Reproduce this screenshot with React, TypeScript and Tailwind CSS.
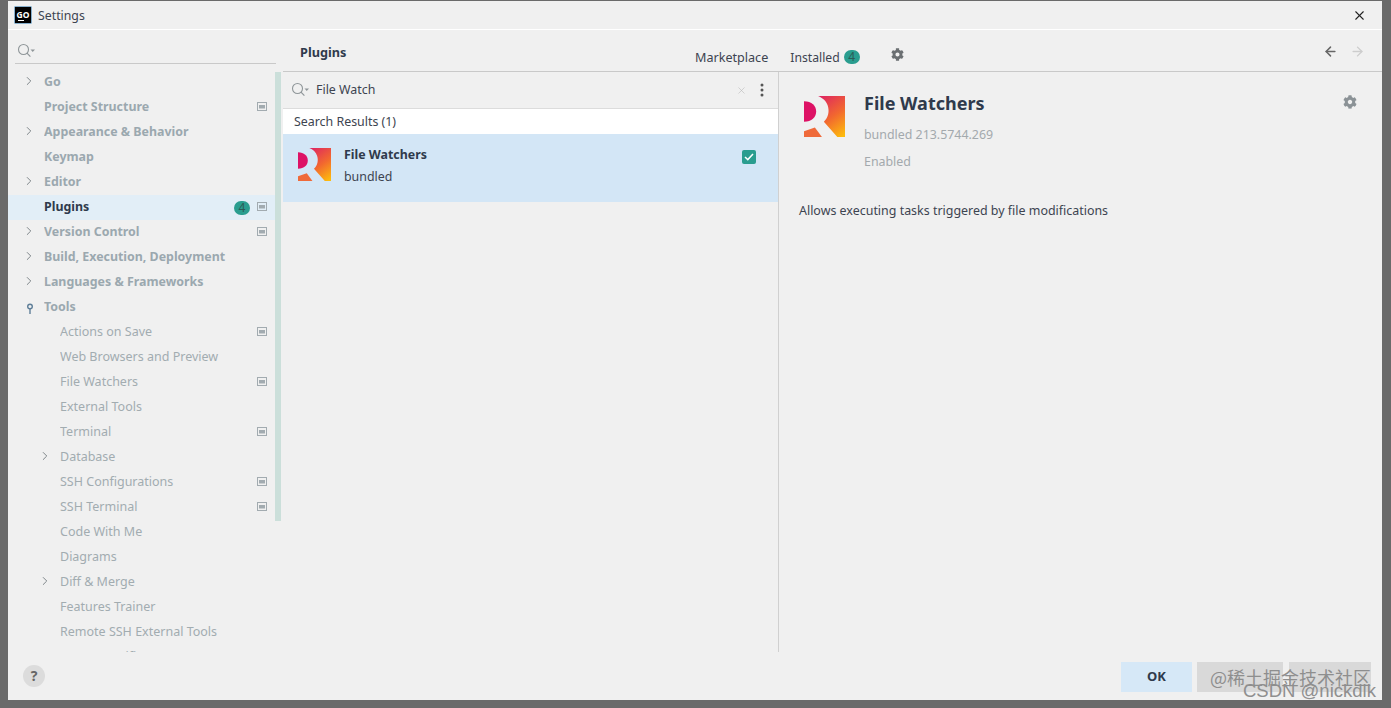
import { ArrowLeft, ArrowRight, ChevronRight, X } from "lucide-react";
import { FaCog } from "react-icons/fa";

type Row = { label: string; level?: 0 | 1; chevron?: boolean; page?: boolean; key?: boolean };

const rows: Row[] = [
  { label: "Go", chevron: true },
  { label: "Project Structure", page: true },
  { label: "Appearance & Behavior", chevron: true },
  { label: "Keymap" },
  { label: "Editor", chevron: true },
  { label: "Plugins", page: true },
  { label: "Version Control", chevron: true, page: true },
  { label: "Build, Execution, Deployment", chevron: true },
  { label: "Languages & Frameworks", chevron: true },
  { label: "Tools", key: true },
  { label: "Actions on Save", level: 1, page: true },
  { label: "Web Browsers and Preview", level: 1 },
  { label: "File Watchers", level: 1, page: true },
  { label: "External Tools", level: 1 },
  { label: "Terminal", level: 1, page: true },
  { label: "Database", level: 1, chevron: true },
  { label: "SSH Configurations", level: 1, page: true },
  { label: "SSH Terminal", level: 1, page: true },
  { label: "Code With Me", level: 1 },
  { label: "Diagrams", level: 1 },
  { label: "Diff & Merge", level: 1, chevron: true },
  { label: "Features Trainer", level: 1 },
  { label: "Remote SSH External Tools", level: 1 },
  { label: "Server Certificates", level: 1 },
];

function SearchIcon() {
  return (
    <svg width="20" height="16" viewBox="0 0 20 16" fill="none" className="shrink-0">
      <circle cx="6.5" cy="6.5" r="5" stroke="#8f9699" strokeWidth="1.1" />
      <path d="M10 10.2 L13.4 13.6" stroke="#8f9699" strokeWidth="1.2" />
      <path d="M13.5 6.5 H18 L15.75 9 Z" fill="#8f9699" />
    </svg>
  );
}

function PageIcon() {
  return (
    <svg width="10" height="9" viewBox="0 0 10 9" className="shrink-0 -translate-y-px">
      <rect x="0.5" y="0.5" width="9" height="8" fill="none" stroke="#a2abb0" />
      <rect x="2" y="3" width="6" height="3.5" fill="#a2abb0" />
    </svg>
  );
}

function PluginLogo({ size, id }: { size: number; id: string }) {
  return (
    <svg width={size} height={size} viewBox="0 0 32 32" className="shrink-0">
      <defs>
        <linearGradient id={id} x1="10" y1="0" x2="32" y2="30" gradientUnits="userSpaceOnUse">
          <stop offset="0" stopColor="#dc1f66" />
          <stop offset="0.55" stopColor="#f2682f" />
          <stop offset="1" stopColor="#fdbb0d" />
        </linearGradient>
      </defs>
      <path d="M0 4 C6 4 9.5 7.5 9.5 12 C9.5 16.5 6 20 0 20 Z" fill="#dd1265" />
      <path d="M11 0 H32 V32 H26 L15.5 20 C19 17 20 12 18.5 7.5 C17.5 4 14.5 1.5 11 0 Z" fill={`url(#${id})`} />
      <path d="M0 27.5 L8.5 24.5 L14 32 H0 Z" fill="#ef6a3a" />
    </svg>
  );
}

function Badge() {
  return (
    <span className="flex h-[14px] w-[16px] items-center justify-center rounded-full bg-[#2a9d8f] text-[12px] leading-none text-[#2b5b57]">
      4
    </span>
  );
}

function TreeRow({ row }: { row: Row }) {
  const selected = row.label === "Plugins";
  const indent = row.level === 1;
  return (
    <div className={`flex h-[25px] shrink-0 items-center pr-[9px] ${selected ? "bg-[#e2eef7]" : ""}`}>
      <span className={`flex w-[16px] shrink-0 justify-center ${indent ? "ml-[29px]" : "ml-[13px]"}`}>
        {row.chevron && <ChevronRight size={14} strokeWidth={1.5} color="#6f777b" className="-translate-y-[2px]" />}
        {row.key && (
          <svg width="8" height="12" viewBox="0 0 8 12" fill="none" className="translate-x-px translate-y-[1px]">
            <circle cx="4" cy="3.5" r="2.3" stroke="#5f7f99" strokeWidth="1.4" />
            <path d="M4 6 V11" stroke="#5f7f99" strokeWidth="1.4" />
          </svg>
        )}
      </span>
      <span
        className={`ml-[7px] flex-1 truncate ${
          indent
            ? "text-[12.5px] text-[#a2acb0]"
            : selected
              ? "text-[12.4px] font-bold text-[#2f3a4c]"
              : "text-[12.4px] font-bold text-[#9ba8af]"
        }`}
      >
        {row.label}
      </span>
      {selected && (
        <span className="mr-[7px]">
          <Badge />
        </span>
      )}
      {row.page && <PageIcon />}
    </div>
  );
}

export default function App() {
  return (
    <div className="relative h-[708px] w-[1391px] overflow-hidden bg-[#6a6a6a] pb-[8px] pl-[8px] pr-[9px] pt-[1px] font-['Noto_Sans','Liberation_Sans',sans-serif] text-[12.4px] text-[#3a4150]">
      <div className="flex h-[699px] w-[1374px] flex-col bg-[#f0f0f0]">
        {/* Title bar */}
        <div className="flex h-[29px] shrink-0 items-center border-b border-white pl-[7px] pr-[15px]">
          <span className="flex h-[16px] w-[16px] shrink-0 flex-col items-center justify-center bg-black shadow-[0_0_0_0.5px_#1e6fa8]">
            <span className="text-[8.5px] font-bold leading-[9px] text-white">GO</span>
            <span className="mr-[5px] mt-px h-px w-[6px] bg-white" />
          </span>
          <span className="ml-[7px] flex-1 pt-[2px] text-[12.3px] text-[#3d4450]">Settings</span>
          <X size={15} strokeWidth={1.7} color="#222" />
        </div>

        {/* Body */}
        <div className="flex min-h-0 flex-1">
          {/* Sidebar */}
          <aside className="flex w-[268px] shrink-0 flex-col">
            <div className="ml-[7px] flex h-[34px] shrink-0 items-center border-b border-[#c9c9c9] pl-[2px] pt-[8px]">
              <SearchIcon />
            </div>
            <div className="mt-[6px] flex h-[582px] flex-col overflow-hidden">
              {rows.map((r) => (
                <TreeRow key={r.label} row={r} />
              ))}
            </div>
          </aside>

          {/* Scrollbar gutter */}
          <div className="w-[7px] shrink-0 pt-[42px]">
            <div className="ml-[-1px] h-[449px] w-[6px] bg-[#cbdfda]" />
          </div>

          {/* Main */}
          <div className="flex min-w-0 flex-1 flex-col">
            <div className="flex h-[42px] shrink-0 border-b border-[#c9c9c9]">
              <div className="w-[412px] pl-[17px] pt-[12px] text-[12.7px] font-bold leading-[20px] text-[#2f3a4c]">Plugins</div>
              <div className="flex h-full items-start pt-[19px]">
                <span className="text-[12.6px] leading-[18px] text-[#3d4450]">Marketplace</span>
                <span className="ml-[22px] text-[12.2px] leading-[18px] text-[#3d4450]">Installed</span>
                <span className="ml-[4px] mt-[1px]">
                  <Badge />
                </span>
                <FaCog size={13} color="#6b6f72" className="ml-[31px] -mt-px" />
              </div>
              <div className="flex flex-1 items-start justify-end gap-[12px] pr-[17px] pt-[14px]">
                <ArrowLeft size={15} strokeWidth={2.4} color="#666" />
                <ArrowRight size={15} strokeWidth={2.2} color="#cdcdcd" />
              </div>
            </div>

            <div className="flex min-h-0 flex-1">
              {/* Plugin list */}
              <div className="flex w-[496px] shrink-0 flex-col border-r border-[#d0d0d0]">
                <div className="flex h-[37px] shrink-0 items-center border-b border-[#dcdcdc] pl-[8px] pr-[14px]">
                  <SearchIcon />
                  <span className="ml-[5px] flex-1 text-[#3d4450]">File Watch</span>
                  <X size={11} strokeWidth={1.2} color="#b5b5b5" />
                  <svg width="4" height="14" viewBox="0 0 4 14" className="ml-[13px]">
                    <circle cx="2" cy="2" r="1.5" fill="#555" />
                    <circle cx="2" cy="7" r="1.5" fill="#555" />
                    <circle cx="2" cy="12" r="1.5" fill="#555" />
                  </svg>
                </div>
                <div className="flex h-[25px] shrink-0 items-center bg-white pl-[11px] pt-[2px] text-[#3d4450]">Search Results (1)</div>
                <div className="flex h-[68px] shrink-0 bg-[#d3e6f6] pl-[15px] pr-[22px] pt-[14px]">
                  <PluginLogo size={33} id="logo-a" />
                  <div className="ml-[13px] flex-1">
                    <div className="mt-[-2px] font-bold leading-[18px] text-[#2f3a4c]">File Watchers</div>
                    <div className="mt-[4px] leading-[18px] text-[#3d4450]">bundled</div>
                  </div>
                  <span className="mt-[2px] flex h-[14px] w-[14px] items-center justify-center rounded-[2px] bg-[#2a9d8f]">
                    <svg width="10" height="8" viewBox="0 0 10 8" fill="none">
                      <path d="M1 4 L3.8 6.6 L9 1" stroke="white" strokeWidth="1.5" />
                    </svg>
                  </span>
                </div>
              </div>

              {/* Details */}
              <div className="min-w-0 flex-1 pl-[20px] pt-[20px]">
                <div className="flex">
                  <div className="ml-[5px] mt-[4px]">
                    <PluginLogo size={41} id="logo-b" />
                  </div>
                  <div className="ml-[19px] flex-1">
                    <div className="mt-[-1px] text-[18px] font-bold leading-[24px] text-[#2f3a4c]">File Watchers</div>
                    <div className="mt-[11px] leading-[18px] text-[#a3a9ad]">bundled 213.5744.269</div>
                    <div className="mt-[9px] leading-[18px] text-[#a3a9ad]">Enabled</div>
                  </div>
                  <FaCog size={14} color="#8b9296" className="mr-[25px] mt-[3px]" />
                </div>
                <div className="mt-[31px] text-[12.45px] leading-[18px] text-[#3d4450]">Allows executing tasks triggered by file modifications</div>
              </div>
            </div>
          </div>
        </div>

        {/* Footer */}
        <div className="flex h-[48px] shrink-0 items-start pl-[15px] pr-[11px] pt-[10px]">
          <span className="mt-[3px] flex h-[22px] w-[22px] items-center justify-center rounded-full bg-[#dcdcdc] text-[14px] font-bold leading-none text-[#666]">?</span>
          <div className="flex-1" />
          <button className="h-[30px] w-[71px] bg-[#d6e8f7] text-[13px] font-bold text-[#2f3a4c]">OK</button>
          <div className="ml-[5px] h-[30px] w-[86px] bg-[#d9d9d9]" />
          <div className="ml-[6px] h-[30px] w-[82px] bg-[#d9d9d9]" />
        </div>
      </div>

      {/* Watermarks */}
      <div className="absolute left-[1210px] top-[665px] whitespace-nowrap font-['Noto_Sans_CJK_SC',sans-serif] text-[18px] leading-[24px] text-[#8e8e8e]">@稀土掘金技术社区</div>
      <div className="absolute left-[1243px] top-[680px] whitespace-nowrap font-['Liberation_Sans',sans-serif] text-[18.5px] leading-[22px] text-[#8f8f8f]">CSDN @nickdlk</div>
    </div>
  );
}
